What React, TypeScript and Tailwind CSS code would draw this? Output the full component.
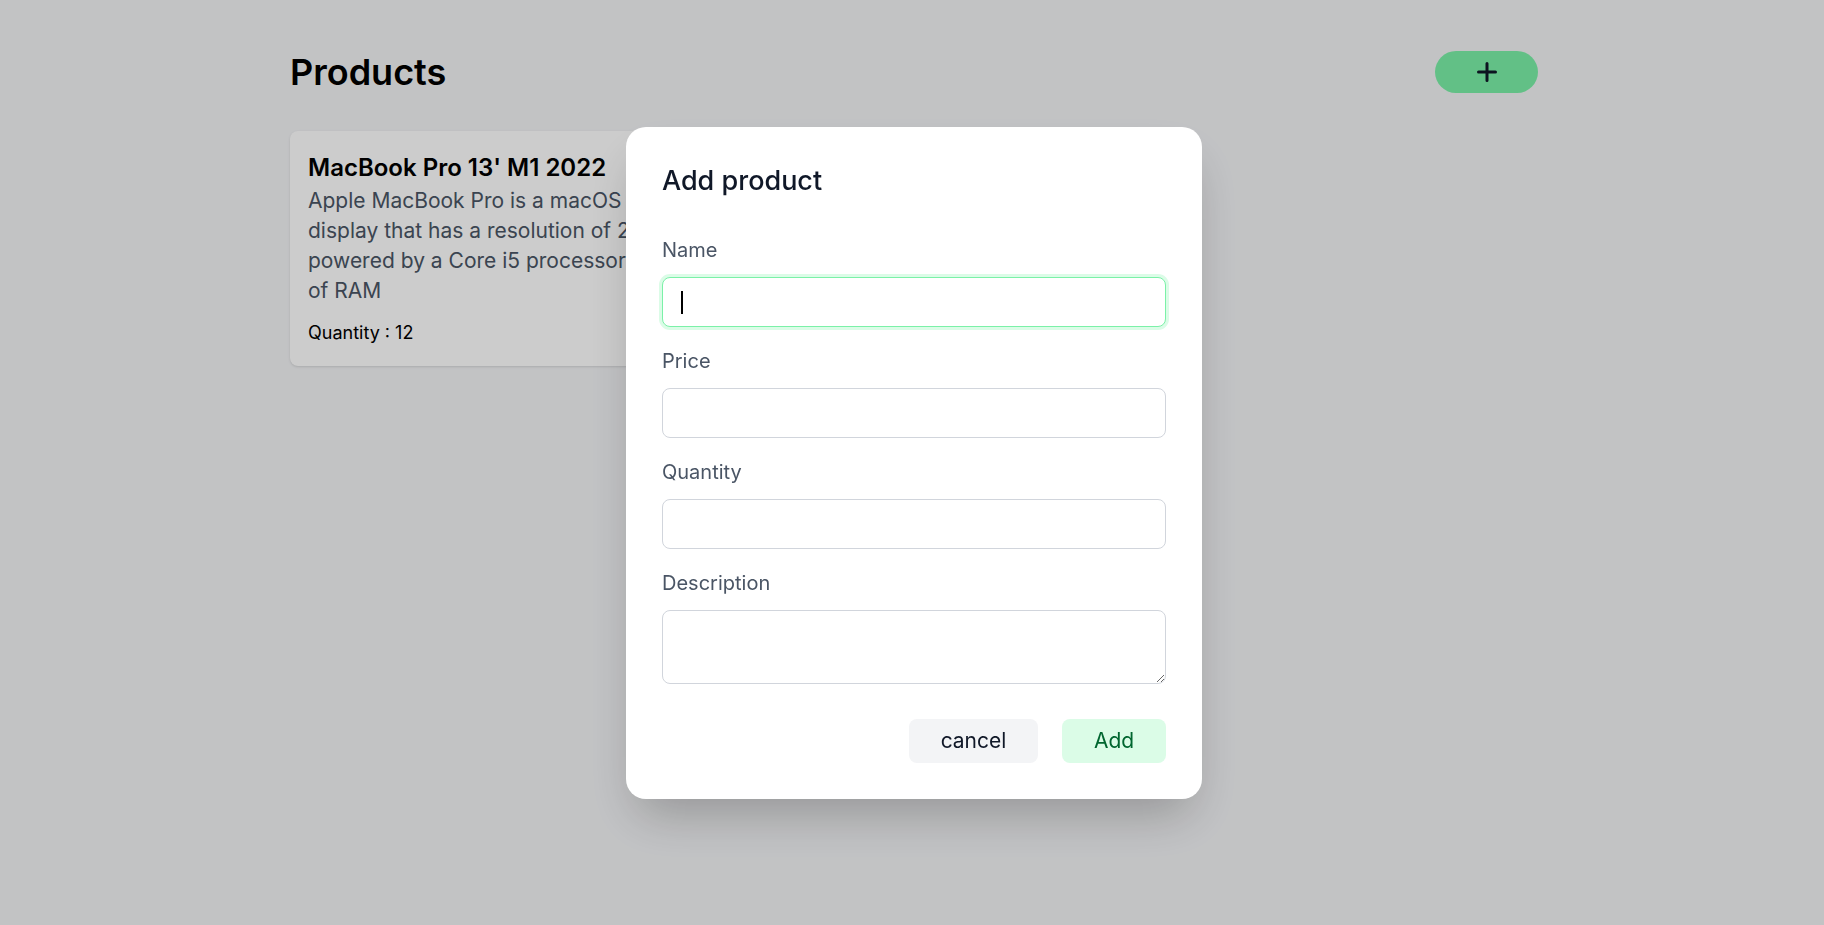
import { type ReactNode } from 'react'

function Field({ label, children }: { label: string; children: ReactNode }) {
  return (
    <div className="flex flex-col">
      <label className="text-[20px] leading-[30px] text-gray-600">{label}</label>
      <div className="mt-[12px]">{children}</div>
    </div>
  )
}

const inputBase =
  'block w-full rounded-lg border border-gray-300 bg-white px-4 text-[20px] text-gray-900 outline-none'

export default function App() {
  return (
    <div className="relative min-h-screen bg-gray-100 pl-[4px] font-['Inter',sans-serif]">
      <div className="mx-auto max-w-7xl px-4">
        {/* Header */}
        <header className="flex items-center justify-between pt-[51px]">
          <h1 className="text-4xl leading-10 font-semibold text-black">Products</h1>
          <button className="flex h-[42px] w-[103px] items-center justify-center rounded-full bg-green-300 text-gray-900">
            <svg width="20" height="20" viewBox="0 0 20 20" fill="none">
              <path d="M10 1.5v17M1.5 10h17" stroke="currentColor" strokeWidth="3" strokeLinecap="round" />
            </svg>
          </button>
        </header>

        {/* Product list */}
        <div className="mt-[38px] grid grid-cols-2 gap-6">
          <div className="overflow-hidden rounded-lg bg-white px-[18px] pt-[22px] pb-[20px] shadow">
            <h2 className="text-2xl leading-[30px] font-semibold text-black">MacBook Pro 13' M1 2022</h2>
            <p className="mt-[3px] text-[21px] leading-[30px] whitespace-pre text-gray-600">
              {'Apple MacBook Pro is a macOS laptop with a 13.30-inch\ndisplay that has a resolution of 2560x1600 pixels. It is\npowered by a Core i5 processor and it comes with 12GB\nof RAM'}
            </p>
            <p className="mt-[14px] text-lg leading-[26px] text-black">Quantity : 12</p>
          </div>
        </div>
      </div>

      {/* Modal */}
      <div className="fixed inset-0 flex items-center justify-center bg-black/20 pl-[4px]">
        <div className="w-full max-w-xl rounded-[20px] bg-white p-9 shadow-2xl">
          <h3 className="text-[27px] leading-9 font-medium text-gray-900">Add product</h3>

          <div className="mt-9 flex flex-col gap-[19px]">
            <Field label="Name">
              <div className="relative">
                <input className={`${inputBase} h-[50px] border-green-300 ring-[3px] ring-green-100`} />
                <span className="absolute top-[14px] left-[19px] h-[23px] w-[2px] bg-black" />
              </div>
            </Field>
            <Field label="Price">
              <input className={`${inputBase} h-[50px]`} />
            </Field>
            <Field label="Quantity">
              <input className={`${inputBase} h-[50px]`} />
            </Field>
            <Field label="Description">
              <textarea className={`${inputBase} h-[74px] py-2`} />
            </Field>
          </div>

          <div className="mt-[35px] flex justify-end gap-6">
            <button className="h-[44px] w-[129px] rounded-lg bg-gray-100 text-[21px] text-gray-900">cancel</button>
            <button className="h-[44px] w-[104px] rounded-lg bg-green-100 text-[21px] text-green-800">Add</button>
          </div>
        </div>
      </div>
    </div>
  )
}
